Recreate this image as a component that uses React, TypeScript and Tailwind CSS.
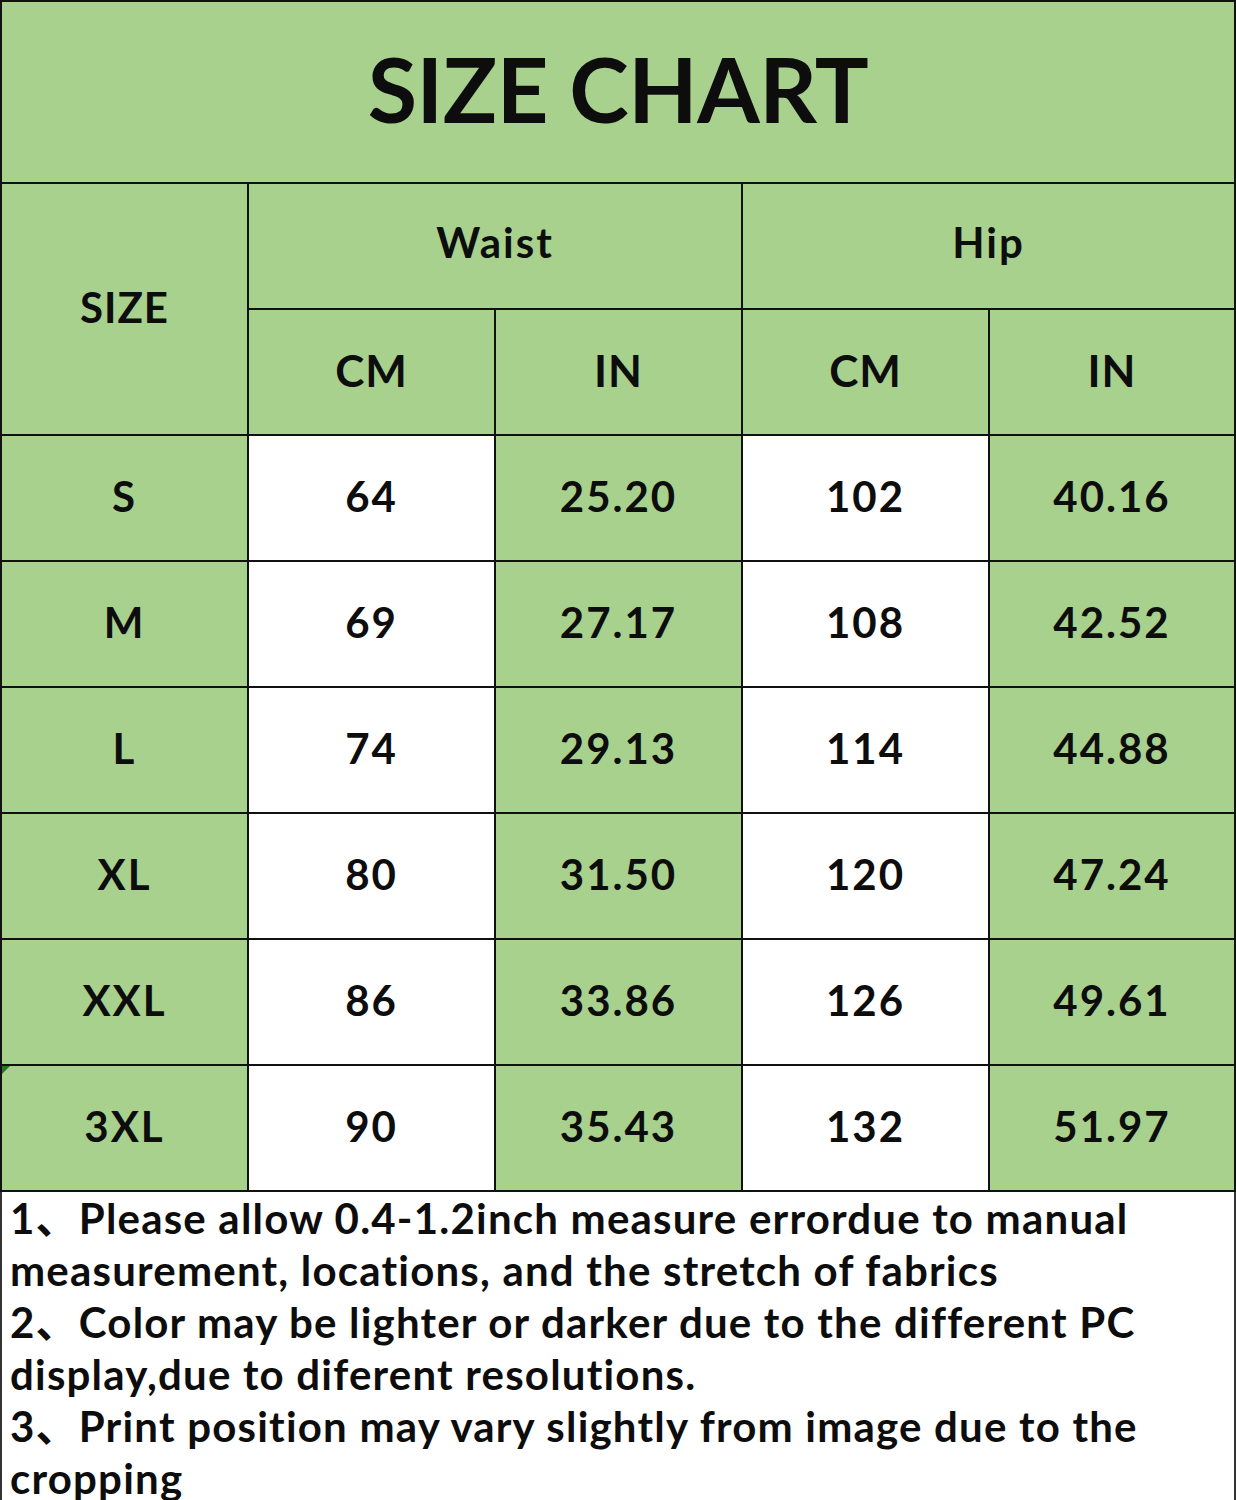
import React from "react"

const rows = [
  { size: "S", wcm: "64", win: "25.20", hcm: "102", hin: "40.16" },
  { size: "M", wcm: "69", win: "27.17", hcm: "108", hin: "42.52" },
  { size: "L", wcm: "74", win: "29.13", hcm: "114", hin: "44.88" },
  { size: "XL", wcm: "80", win: "31.50", hcm: "120", hin: "47.24" },
  { size: "XXL", wcm: "86", win: "33.86", hcm: "126", hin: "49.61" },
  { size: "3XL", wcm: "90", win: "35.43", hcm: "132", hin: "51.97" },
]

const cell = "border-2 border-[#111] text-center align-middle p-0"
const green = "bg-[#a9d18e]"

export default function App() {
  return (
    <div
      className="w-[1236px] h-[1500px] bg-white text-[#0d0d0d] overflow-hidden"
      style={{ fontFamily: 'Lato, "Open Sans", "Noto Sans CJK SC", sans-serif' }}
    >
      <table className="w-full border-collapse table-fixed font-bold">
        <colgroup>
          <col className="w-[247px]" />
          <col className="w-[247px]" />
          <col className="w-[247px]" />
          <col className="w-[247px]" />
          <col />
        </colgroup>
        <tbody>
          <tr className="h-[182px]">
            <td colSpan={5} className={`${cell} ${green} text-[90px] leading-none tracking-[-0.5px] pb-2`}>
              SIZE CHART
            </td>
          </tr>
          <tr className="h-[126px]">
            <td rowSpan={2} className={`${cell} ${green} text-[42px] tracking-[1px] pb-1`}>
              SIZE
            </td>
            <td colSpan={2} className={`${cell} ${green} text-[42px] tracking-[2px] pb-2`}>
              Waist
            </td>
            <td colSpan={2} className={`${cell} ${green} text-[42px] tracking-[2px] pb-2`}>
              Hip
            </td>
          </tr>
          <tr className="h-[126px]">
            <td className={`${cell} ${green} text-[44px] tracking-[1px] pb-1`}>CM</td>
            <td className={`${cell} ${green} text-[44px] tracking-[1px] pb-1`}>IN</td>
            <td className={`${cell} ${green} text-[44px] tracking-[1px] pb-1`}>CM</td>
            <td className={`${cell} ${green} text-[44px] tracking-[1px] pb-1`}>IN</td>
          </tr>
          {rows.map((r, i) => (
            <tr key={r.size} className="h-[126px] text-[42px] tracking-[2px]">
              <td className={`${cell} ${green} relative pb-1`}>
                {i === rows.length - 1 && (
                  <span className="absolute left-0 top-0 w-0 h-0 border-t-[8px] border-r-[8px] border-t-[#1e7b1e] border-r-transparent" />
                )}
                {r.size}
              </td>
              <td className={`${cell} bg-white pb-1`}>{r.wcm}</td>
              <td className={`${cell} ${green} pb-1`}>{r.win}</td>
              <td className={`${cell} bg-white pb-1`}>{r.hcm}</td>
              <td className={`${cell} ${green} pb-1`}>{r.hin}</td>
            </tr>
          ))}
        </tbody>
      </table>
      <div className="h-[310px] border-2 border-t-0 border-[#333] overflow-hidden px-[8px] text-[42px] leading-[52px] font-bold tracking-[1.2px]">
        <p>1、Please allow 0.4-1.2inch measure errordue to manual measurement, locations, and the stretch of fabrics</p>
        <p>2、Color may be lighter or darker due to the different PC display,due to diferent resolutions.</p>
        <p>3、Print position may vary slightly from image due to the cropping</p>
      </div>
    </div>
  )
}
